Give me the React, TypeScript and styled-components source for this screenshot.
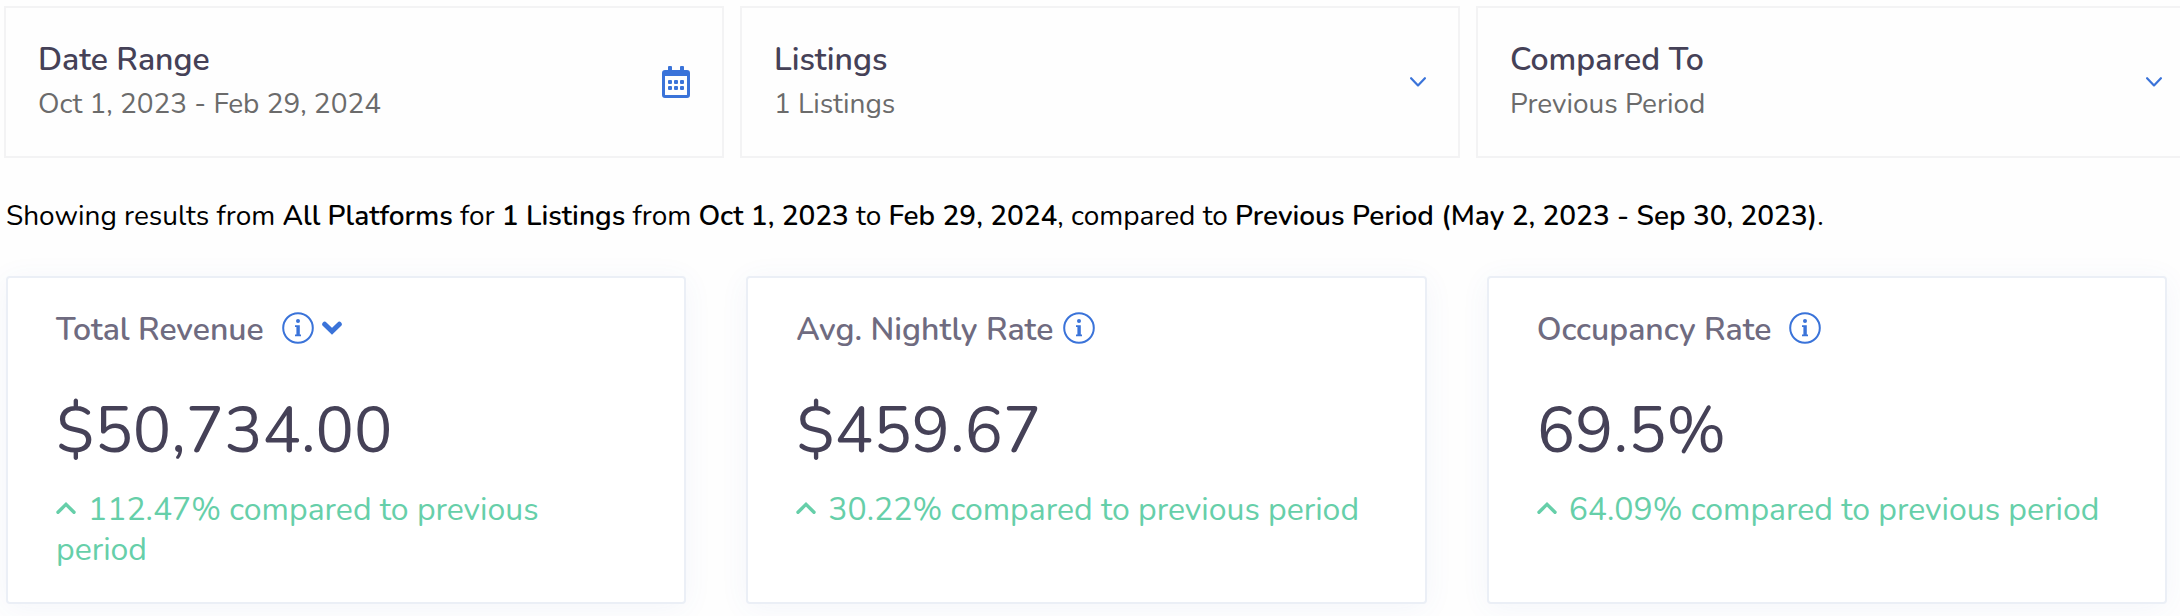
import React from 'react';
import styled, { createGlobalStyle } from 'styled-components';

const color = {
  heading: '#454157',
  label: '#6f6b80',
  muted: '#6b6b6b',
  blue: '#3a73d9',
  green: '#66cfa9',
  filterBorder: '#f3f3f4',
  cardBorder: '#ebeff6',
};

const GlobalStyle = createGlobalStyle`
  *, *::before, *::after { box-sizing: border-box; }
  body {
    margin: 0;
    background: #fefefe;
    color: #000;
    font-family: Nunito, "Noto Sans", sans-serif;
    overflow-x: hidden;
  }
  button, select { font: inherit; color: inherit; }
`;

const Page = styled.main`
  padding: 6px 0 12px;
  overflow: hidden;
`;

const FilterBar = styled.section`
  display: grid;
  grid-template-columns: repeat(3, minmax(0, 1fr));
  gap: 16px;
  margin: 0 -16px 0 4px;
`;

const FilterCard = styled.div`
  display: grid;
  grid-template-columns: minmax(0, 1fr) auto;
  align-items: center;
  padding: 30px 32px;
  border: 2px solid ${color.filterBorder};
  background: #fefefe;
`;

const FilterTitle = styled.label`
  grid-area: 1 / 1;
  font-size: 32px;
  line-height: 44px;
  font-weight: 600;
  color: ${color.heading};
`;

const DateButton = styled.button`
  grid-area: 2 / 1;
  padding: 0;
  border: 0;
  background: none;
  text-align: left;
  font-size: 28px;
  line-height: 44px;
  color: ${color.muted};
  cursor: pointer;
`;

const FilterSelect = styled.select`
  grid-area: 2 / 1;
  height: 44px;
  padding: 0;
  border: 0;
  background: none;
  appearance: none;
  font-size: 28px;
  line-height: 44px;
  color: ${color.muted};
  cursor: pointer;
`;

const FilterIcon = styled.span`
  grid-area: 1 / 2 / 3 / 3;
  display: flex;
  color: ${color.blue};
  pointer-events: none;
`;

const Summary = styled.p`
  margin: 38px 6px 40px;
  font-size: 28px;
  line-height: 40px;

  strong { font-weight: 600; }
`;

const Metrics = styled.section`
  display: grid;
  grid-template-columns: repeat(3, minmax(0, 1fr));
  gap: 60px;
  padding: 0 13px 0 6px;
`;

const MetricCard = styled.article`
  padding: 30px 48px 32px;
  border: 2px solid ${color.cardBorder};
  border-radius: 4px;
  background: #fff;
  box-shadow: 0 4px 30px rgba(70, 110, 190, 0.06);
`;

const MetricHeader = styled.header<{ $gap: number }>`
  display: flex;
  align-items: flex-start;
  gap: ${({ $gap }) => $gap}px;
`;

const MetricLabel = styled.h2`
  margin: 0;
  font-size: 32px;
  line-height: 44px;
  font-weight: 600;
  color: ${color.label};
`;

const Actions = styled.div`
  display: flex;
  align-items: center;
  gap: 8px;
  height: 40px;
`;

const IconButton = styled.button`
  display: flex;
  padding: 0;
  border: 0;
  background: none;
  color: ${color.blue};
  cursor: pointer;
`;

const MetricValue = styled.p`
  margin: 35px 0 15px;
  font-size: 64px;
  line-height: 88px;
  color: ${color.heading};
`;

const Delta = styled.p`
  margin: 0;
  font-size: 32px;
  line-height: 40px;
  color: ${color.green};

  svg {
    margin-right: 12px;
    vertical-align: 6px;
  }
`;

const CalendarIcon = () => (
  <svg width="28" height="32" viewBox="0 0 28 32" fill="currentColor" aria-hidden="true">
    <path
      fillRule="evenodd"
      d="M7 0h2a1 1 0 0 1 1 1v3h8V1a1 1 0 0 1 1-1h2a1 1 0 0 1 1 1v3h3a3 3 0 0 1 3 3v22a3 3 0 0 1-3 3H3a3 3 0 0 1-3-3V7a3 3 0 0 1 3-3h3V1a1 1 0 0 1 1-1ZM3 10v18.500a.5.5 0 0 0 .5.5h21a.5.5 0 0 0 .5-.5V10Z"
    />
    {[6, 12, 18].map((x) =>
      [14, 20].map((y) => <rect key={`${x}-${y}`} x={x} y={y} width="4" height="4" rx="1" />),
    )}
  </svg>
);

const ThinChevron = () => (
  <svg width="16" height="10" viewBox="0 0 16 10" fill="none" stroke="currentColor" strokeWidth="2.200" strokeLinecap="round" strokeLinejoin="round" aria-hidden="true">
    <path d="M1.100 1.200l6.900 7.200 6.900-7.200" />
  </svg>
);

const BoldChevron = () => (
  <svg width="20" height="14" viewBox="0 0 20 14" fill="none" stroke="currentColor" strokeWidth="5" strokeLinecap="round" aria-hidden="true">
    <path d="M2.700 3.200l7.300 7 7.300-7" />
  </svg>
);

const InfoIcon = () => (
  <svg width="32" height="32" viewBox="0 0 32 32" aria-hidden="true">
    <circle cx="16" cy="16" r="14.800" fill="none" stroke="currentColor" strokeWidth="2" />
    <circle cx="16" cy="9" r="2" fill="currentColor" />
    <path d="M13 13.200h4.800v9.300h1.200v1.700h-6v-1.700h1.400v-7.600H13Z" fill="currentColor" />
  </svg>
);

const UpArrow = () => (
  <svg width="20" height="12" viewBox="0 0 20 12" fill="none" stroke="currentColor" strokeWidth="3.400" strokeLinecap="round" aria-hidden="true">
    <path d="M2 10.200l8-7.800 8 7.800" />
  </svg>
);

const selectFilters = [
  { id: 'listings', title: 'Listings', value: '1 Listings' },
  { id: 'compared-to', title: 'Compared To', value: 'Previous Period' },
];

const metrics = [
  { label: 'Total Revenue', value: '$50,734.00', change: '112.47%', gap: 18, expandable: true },
  { label: 'Avg. Nightly Rate', value: '$459.67', change: '30.22%', gap: 10, expandable: false },
  { label: 'Occupancy Rate', value: '69.5%', change: '64.09%', gap: 18, expandable: false },
];

export default function App() {
  return (
    <>
      <GlobalStyle />
      <Page>
        <FilterBar aria-label="Filters">
          <FilterCard>
            <FilterTitle htmlFor="date-range">Date Range</FilterTitle>
            <DateButton id="date-range" type="button">Oct 1, 2023 - Feb 29, 2024</DateButton>
            <FilterIcon><CalendarIcon /></FilterIcon>
          </FilterCard>
          {selectFilters.map(({ id, title, value }) => (
            <FilterCard key={id}>
              <FilterTitle htmlFor={id}>{title}</FilterTitle>
              <FilterSelect id={id} defaultValue={value}>
                <option>{value}</option>
              </FilterSelect>
              <FilterIcon><ThinChevron /></FilterIcon>
            </FilterCard>
          ))}
        </FilterBar>

        <Summary>
          Showing results from <strong>All Platforms</strong> for <strong>1 Listings</strong> from{' '}
          <strong>Oct 1, 2023</strong> to <strong>Feb 29, 2024</strong>, compared to{' '}
          <strong>Previous Period (May 2, 2023 - Sep 30, 2023)</strong>.
        </Summary>

        <Metrics aria-label="Performance">
          {metrics.map(({ label, value, change, gap, expandable }) => (
            <MetricCard key={label}>
              <MetricHeader $gap={gap}>
                <MetricLabel>{label}</MetricLabel>
                <Actions>
                  <IconButton type="button" aria-label={`About ${label}`}><InfoIcon /></IconButton>
                  {expandable && (
                    <IconButton type="button" aria-label={`Choose ${label} type`}><BoldChevron /></IconButton>
                  )}
                </Actions>
              </MetricHeader>
              <MetricValue>{value}</MetricValue>
              <Delta><UpArrow />{`${change} compared to previous period`}</Delta>
            </MetricCard>
          ))}
        </Metrics>
      </Page>
    </>
  );
}
